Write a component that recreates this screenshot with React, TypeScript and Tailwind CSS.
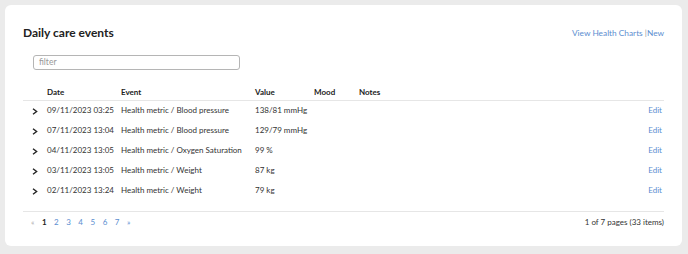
import React from "react";

const rows = [
  { date: "09/11/2023 03:25", event: "Health metric / Blood pressure", value: "138/81 mmHg" },
  { date: "07/11/2023 13:04", event: "Health metric / Blood pressure", value: "129/79 mmHg" },
  { date: "04/11/2023 13:05", event: "Health metric / Oxygen Saturation", value: "99 %" },
  { date: "03/11/2023 13:05", event: "Health metric / Weight", value: "87 kg" },
  { date: "02/11/2023 13:24", event: "Health metric / Weight", value: "79 kg" },
];

function Chevron() {
  return (
    <svg width="6" height="7" viewBox="0 0 6 7" className="block">
      <path d="M1 0.8 L4.6 3.5 L1 6.2" fill="none" stroke="#222" strokeWidth="1.4" />
    </svg>
  );
}

export default function App() {
  return (
    <div
      className="w-[688px] h-[254px] bg-[#ebebeb] p-[5px] pr-[6px] pb-[8px]"
      style={{ fontFamily: "Lato, 'Open Sans', sans-serif" }}
    >
      <div className="h-full bg-white rounded-[6px] pl-[18px] pr-[18px] pt-[19px]">
        <div className="flex items-center justify-between h-[18px]">
          <h1 className="text-[12px] font-bold text-[#222] leading-none">Daily care events</h1>
          <div className="text-[8.3px] text-[#5b8ed0] leading-none">
            View Health Charts <span className="text-[#999]">|</span>New
          </div>
        </div>
        <div className="mt-[13px] pl-[10px]">
          <div className="w-[207px] h-[15px] border border-[#b5b5b5] rounded-[3px] flex items-center px-[5px] text-[8.5px] text-[#999]">
            filter
          </div>
        </div>
        <div className="mt-[14px]">
          <div className="flex items-center h-[17px] border-b border-[#e6e6e6] text-[8px] font-bold text-[#222]">
            <div className="w-[24px]" />
            <div className="w-[74px]">Date</div>
            <div className="w-[134px]">Event</div>
            <div className="w-[59px]">Value</div>
            <div className="w-[45px]">Mood</div>
            <div>Notes</div>
          </div>
          {rows.map((r) => (
            <div key={r.date} className="flex items-center h-[20px] pb-[2px] text-[8px] text-[#333]">
              <div className="w-[24px] pl-[9px] pt-[2px]">
                <Chevron />
              </div>
              <div className="w-[74px]">{r.date}</div>
              <div className="w-[134px]">{r.event}</div>
              <div className="w-[59px]">{r.value}</div>
              <div className="flex-1" />
              <div className="text-[#5b8ed0] pr-[2px]">Edit</div>
            </div>
          ))}
          <div className="mt-[10px] border-t border-[#e6e6e6] flex items-center justify-between h-[20px] text-[8px]">
            <div className="flex items-center gap-[7.5px] pl-[8px] text-[#5b8ed0]">
              <span className="text-[#aaa]">«</span>
              <span className="font-bold text-[#222]">1</span>
              <span>2</span>
              <span>3</span>
              <span>4</span>
              <span>5</span>
              <span>6</span>
              <span>7</span>
              <span>»</span>
            </div>
            <div className="text-[#333]">1 of 7 pages (33 items)</div>
          </div>
        </div>
      </div>
    </div>
  );
}
